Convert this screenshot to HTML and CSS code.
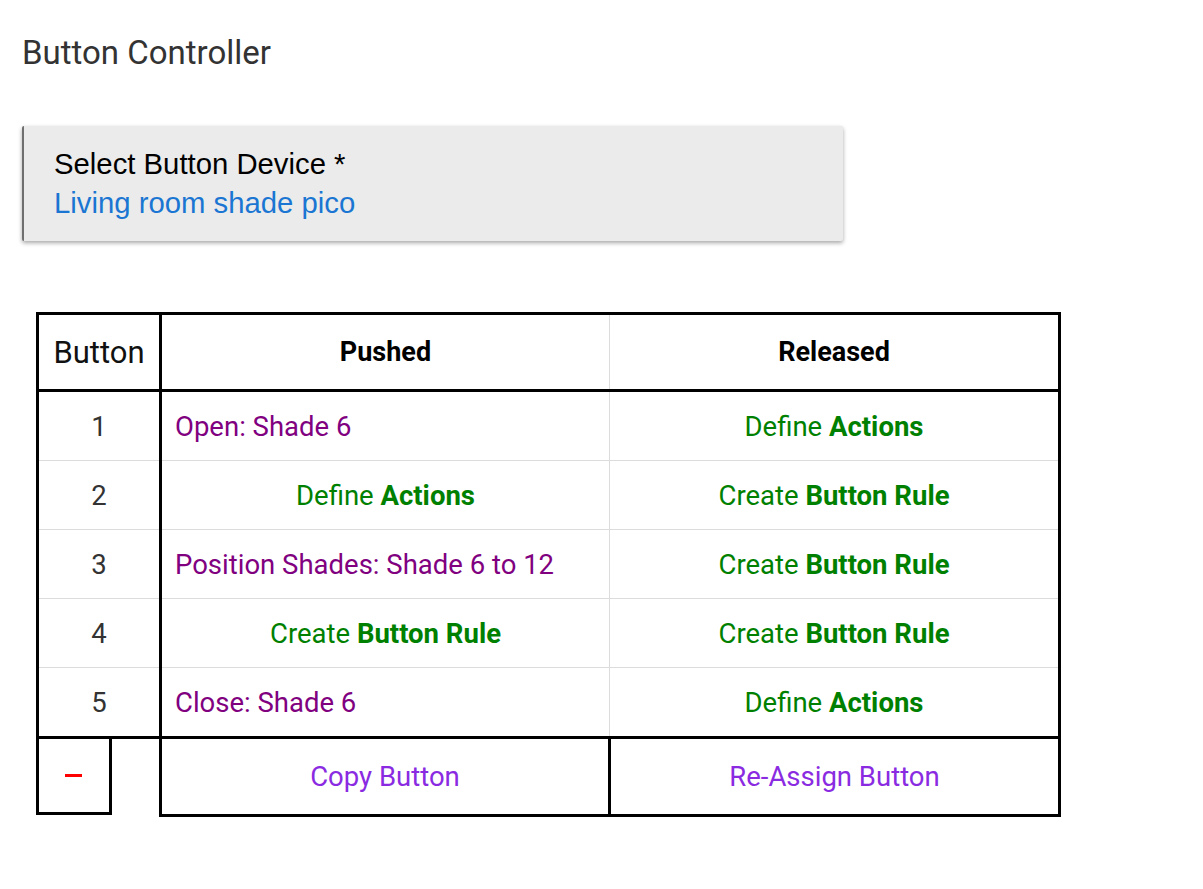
FILE: index.html
```html
<!DOCTYPE html>
<html>
<head>
<meta charset="utf-8">
<link rel="stylesheet" href="styles.css">
</head>
<body>
<div class="page">
  <h1 class="title">Button Controller</h1>
  <div class="select-box">
    <div class="select-label">Select Button Device *</div>
    <div class="select-value">Living room shade pico</div>
  </div>
  <table class="grid">
    <colgroup>
      <col class="col-num">
      <col class="col-push">
      <col class="col-rel">
    </colgroup>
    <thead>
      <tr>
        <th class="c-num">Button</th>
        <th class="c-push">Pushed</th>
        <th class="c-rel">Released</th>
      </tr>
    </thead>
    <tbody>
      <tr>
        <td class="c-num">1</td>
        <td class="c-push left"><span class="act">Open: Shade 6</span></td>
        <td class="c-rel"><span class="def">Define <b>Actions</b></span></td>
      </tr>
      <tr>
        <td class="c-num">2</td>
        <td class="c-push"><span class="def">Define <b>Actions</b></span></td>
        <td class="c-rel"><span class="def">Create <b>Button Rule</b></span></td>
      </tr>
      <tr>
        <td class="c-num">3</td>
        <td class="c-push left"><span class="act">Position Shades: Shade 6 to 12</span></td>
        <td class="c-rel"><span class="def">Create <b>Button Rule</b></span></td>
      </tr>
      <tr>
        <td class="c-num">4</td>
        <td class="c-push"><span class="def">Create <b>Button Rule</b></span></td>
        <td class="c-rel"><span class="def">Create <b>Button Rule</b></span></td>
      </tr>
      <tr>
        <td class="c-num">5</td>
        <td class="c-push left"><span class="act">Close: Shade 6</span></td>
        <td class="c-rel"><span class="def">Define <b>Actions</b></span></td>
      </tr>
      <tr class="foot">
        <td class="c-num foot-num"><div class="minus-box"><span class="minus"></span></div></td>
        <td class="c-push foot-cell"><span class="link">Copy Button</span></td>
        <td class="c-rel foot-cell"><span class="link">Re-Assign Button</span></td>
      </tr>
    </tbody>
  </table>
</div>
</body>
</html>
```
FILE: styles.css
```css
html, body {
  margin: 0;
  padding: 0;
  background: #fff;
}
.page {
  padding: 34px 0 0 22px;
  font-family: Roboto, "Liberation Sans", sans-serif;
}
.title {
  margin: 0;
  font-size: 33px;
  font-weight: 400;
  line-height: 38px;
  color: #333;
}
.select-box {
  margin-top: 54px;
  width: 821px;
  height: 115px;
  box-sizing: border-box;
  padding: 18px 0 0 30px;
  background: #ebebeb;
  border-left: 2px solid #6f6f6f;
  border-radius: 2px;
  box-shadow: 0 2px 4px rgba(0,0,0,0.35);
  font-family: "Liberation Sans", Arial, sans-serif;
  font-size: 29.3px;
  line-height: 39px;
}
.select-label {
  color: #000;
}
.select-value {
  color: #1a76d2;
}
.grid {
  margin: 71px 0 0 14px;
  border-collapse: collapse;
  table-layout: fixed;
  width: 1022px;
  font-size: 27.5px;
}
.col-num { width: 123px; }
.col-push { width: 449px; }
.col-rel { width: 450px; }
.grid th, .grid td {
  padding: 0;
  text-align: center;
  border: 1px solid #dcdcdc;
}
.grid th {
  height: 74px;
  font-weight: 400;
  color: #000;
  border-top: 3px solid #000;
  border-bottom: 3px solid #000;
}
.grid th.c-num {
  font-size: 31px;
  color: #111;
}
.grid th.c-push, .grid th.c-rel {
  font-weight: 700;
  font-size: 27px;
}
.grid td {
  height: 68px;
}
.c-num {
  border-left: 3px solid #000 !important;
  border-right: 3px solid #000 !important;
  color: #333;
}
.c-rel {
  border-right: 3px solid #000 !important;
}
.grid td.left {
  text-align: left;
  padding-left: 13px;
}
.act {
  color: #800080;
}
.def {
  color: #008000;
}
.def b {
  font-weight: 700;
}
.foot td {
  height: 71px;
  border-top: 3px solid #000;
  border-bottom: 3px solid #000;
}
.foot td.foot-num {
  border-left: none !important;
  border-right: 3px solid #000 !important;
  border-bottom: none;
  vertical-align: top;
  text-align: left;
}
.minus-box {
  width: 70px;
  height: 73px;
  border-left: 3px solid #000;
  border-right: 3px solid #000;
  border-bottom: 3px solid #000;
  margin-left: -2px;
  display: flex;
  align-items: center;
  justify-content: center;
}
.minus {
  display: block;
  width: 17px;
  height: 3px;
  background: #f00;
}
.foot-cell {
  border-right: 3px solid #000 !important;
}
.link {
  color: #8a2be2;
}
```
